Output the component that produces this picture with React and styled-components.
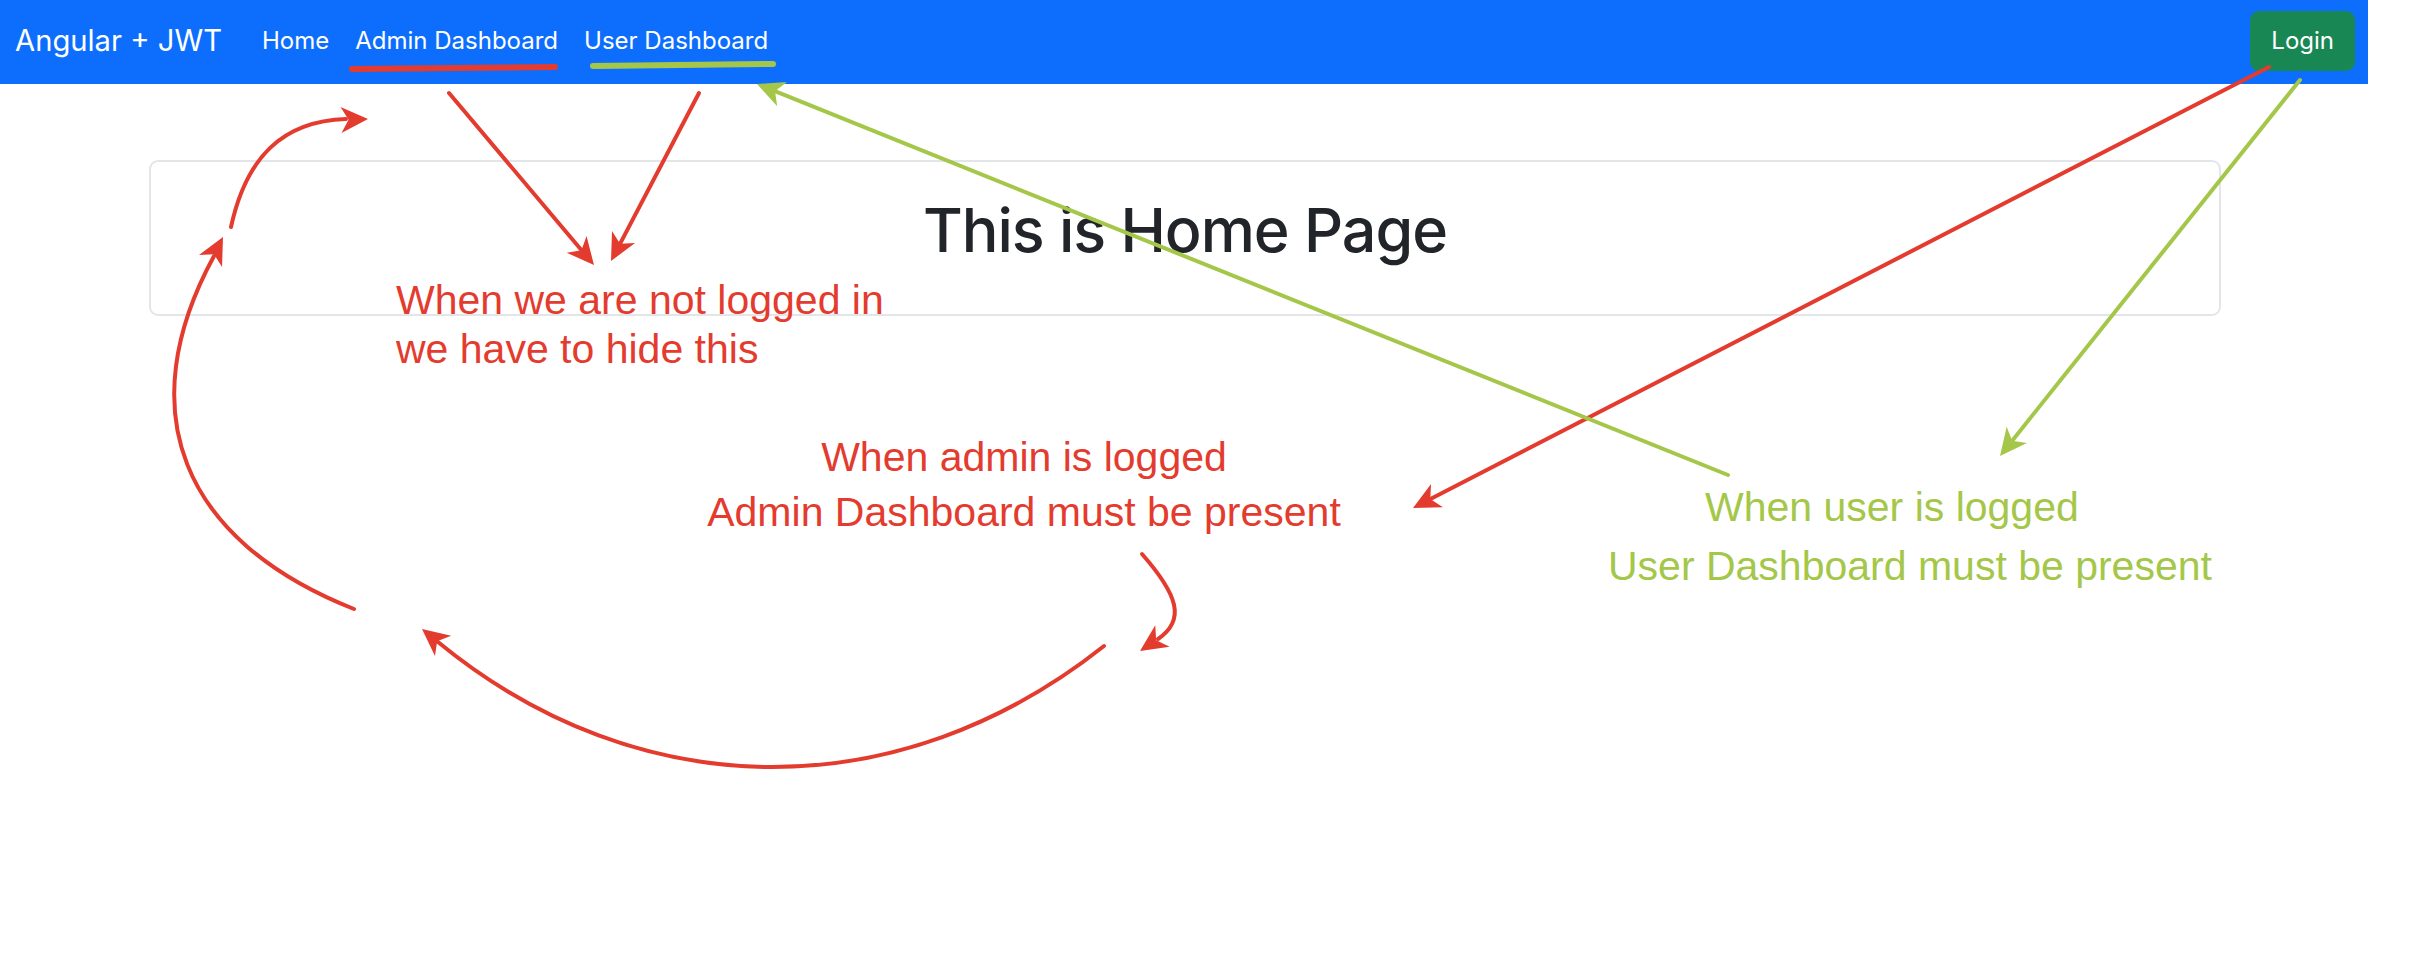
import React from 'react'
import styled, { createGlobalStyle } from 'styled-components'

const RED = '#e43b2f'
const GREEN = '#a4c74a'

const GlobalStyle = createGlobalStyle`
  html, body {
    margin: 0;
    padding: 0;
    background: #ffffff;
  }
  body {
    font-family: Inter, "Liberation Sans", Arial, sans-serif;
    color: #212529;
  }
`

const Page = styled.div`
  position: relative;
  width: 2368px;
  min-height: 976px;
`

const NavBar = styled.nav`
  height: 84px;
  box-sizing: border-box;
  background: #0d6efd;
  display: flex;
  align-items: center;
  padding: 0 13px 3px 15px;
`

const Brand = styled.a`
  font-size: 29.2px;
  color: #ffffff;
  text-decoration: none;
  margin-right: 28px;
  line-height: 1.21;
`

const NavList = styled.ul`
  display: flex;
  list-style: none;
  margin: 0;
  padding: 0;
  gap: 2px;
  flex: 1;
`

const NavLink = styled.a`
  display: block;
  font-size: 24px;
  line-height: 1.5;
  padding: 0 12px;
  color: #ffffff;
  text-decoration: none;
`

const LoginButton = styled.button`
  font-family: inherit;
  font-size: 24px;
  line-height: 1.5;
  color: #ffffff;
  background: #198754;
  border: none;
  border-radius: 9px;
  height: 60px;
  padding: 0 21px;
  cursor: pointer;
`

const Main = styled.main`
  padding: 76px 147px 0 149px;
`

const Card = styled.section`
  border: 2px solid #e3e6e9;
  border-radius: 9px;
  padding: 32px 24px 47px;
  text-align: center;
`

const Title = styled.h1`
  margin: 0;
  font-size: 61px;
  font-weight: 500;
  line-height: 1.2;
  letter-spacing: -1px;
  color: #212529;
`

const Overlay = styled.svg`
  position: absolute;
  left: 0;
  top: 0;
  pointer-events: none;
  overflow: visible;
`

const Note = styled.div`
  position: absolute;
  top: ${p => p.$top}px;
  left: ${p => p.$left}px;
  width: ${p => (p.$width ? `${p.$width}px` : 'auto')};
  font-family: "Liberation Sans", Arial, sans-serif;
  font-size: 41px;
  line-height: ${p => p.$lh}px;
  color: ${p => p.$color};
  text-align: ${p => p.$align || 'left'};
  white-space: nowrap;
`

const NoteLine = styled.div`
  padding-left: ${p => p.$indent || 0}px;
`

function headPoints (tip, from, len = 27, half = 13) {
  const dx = tip[0] - from[0]
  const dy = tip[1] - from[1]
  const d = Math.hypot(dx, dy)
  const ux = dx / d
  const uy = dy / d
  const bx = tip[0] - ux * len
  const by = tip[1] - uy * len
  const nx = -uy
  const ny = ux
  const notch = [tip[0] - ux * len * 0.72, tip[1] - uy * len * 0.72]
  return [
    tip,
    [bx + nx * half, by + ny * half],
    notch,
    [bx - nx * half, by - ny * half]
  ].map(p => p.join(',')).join(' ')
}

function straight (start, tip) {
  const dx = tip[0] - start[0]
  const dy = tip[1] - start[1]
  const d = Math.hypot(dx, dy)
  const end = [tip[0] - (dx / d) * 18, tip[1] - (dy / d) * 18]
  return { d: `M${start[0]},${start[1]} L${end[0]},${end[1]}`, tip, from: start }
}

const arrows = [
  { color: RED, ...straight([449, 93], [594, 265]) },
  { color: RED, ...straight([699, 93], [611, 261]) },
  { color: RED, d: 'M231,227 C246,158 282,121 346,119', tip: [368, 119], from: [341, 120] },
  { color: RED, d: 'M354,609 C180,540 130,410 214,256', tip: [223, 237], from: [211, 260] },
  { color: RED, d: 'M1104,646 C900,808 640,808 438,642', tip: [422, 629], from: [442, 645] },
  { color: RED, d: 'M1142,554 C1178,595 1186,620 1158,639', tip: [1140, 651], from: [1161, 637] },
  { color: RED, ...straight([2269, 67], [1413, 508]) },
  { color: GREEN, ...straight([1728, 475], [757, 84]) },
  { color: GREEN, ...straight([2300, 80], [2000, 456]) }
]

function Annotations () {
  return (
    <Overlay width='2368' height='976' viewBox='0 0 2368 976'>
      <line x1='352' y1='69' x2='555' y2='67' stroke={RED} strokeWidth='6' strokeLinecap='round' />
      <line x1='593' y1='66' x2='773' y2='64' stroke={GREEN} strokeWidth='6' strokeLinecap='round' />
      {arrows.map((a, i) => (
        <g key={i}>
          <path d={a.d} fill='none' stroke={a.color} strokeWidth='4' strokeLinecap='round' />
          <polygon points={headPoints(a.tip, a.from)} fill={a.color} />
        </g>
      ))}
    </Overlay>
  )
}

function App () {
  return (
    <>
      <GlobalStyle />
      <Page>
        <NavBar>
          <Brand href='#'>Angular + JWT</Brand>
          <NavList>
            <li><NavLink href='#'>Home</NavLink></li>
            <li><NavLink href='#'>Admin Dashboard</NavLink></li>
            <li><NavLink href='#'>User Dashboard</NavLink></li>
          </NavList>
          <LoginButton>Login</LoginButton>
        </NavBar>
        <Main>
          <Card>
            <Title>This is Home Page</Title>
          </Card>
        </Main>

        <Note $top={276} $left={396} $lh={49} $color={RED}>
          <NoteLine>When we are not logged in</NoteLine>
          <NoteLine>we have to hide this</NoteLine>
        </Note>
        <Note $top={430} $left={624} $width={800} $lh={55} $color={RED} $align='center'>
          <NoteLine>When admin is logged</NoteLine>
          <NoteLine>Admin Dashboard must be present</NoteLine>
        </Note>
        <Note $top={478} $left={1608} $lh={59} $color={GREEN}>
          <NoteLine $indent={97}>When user is logged</NoteLine>
          <NoteLine>User Dashboard must be present</NoteLine>
        </Note>

        <Annotations />
      </Page>
    </>
  )
}

export default App
